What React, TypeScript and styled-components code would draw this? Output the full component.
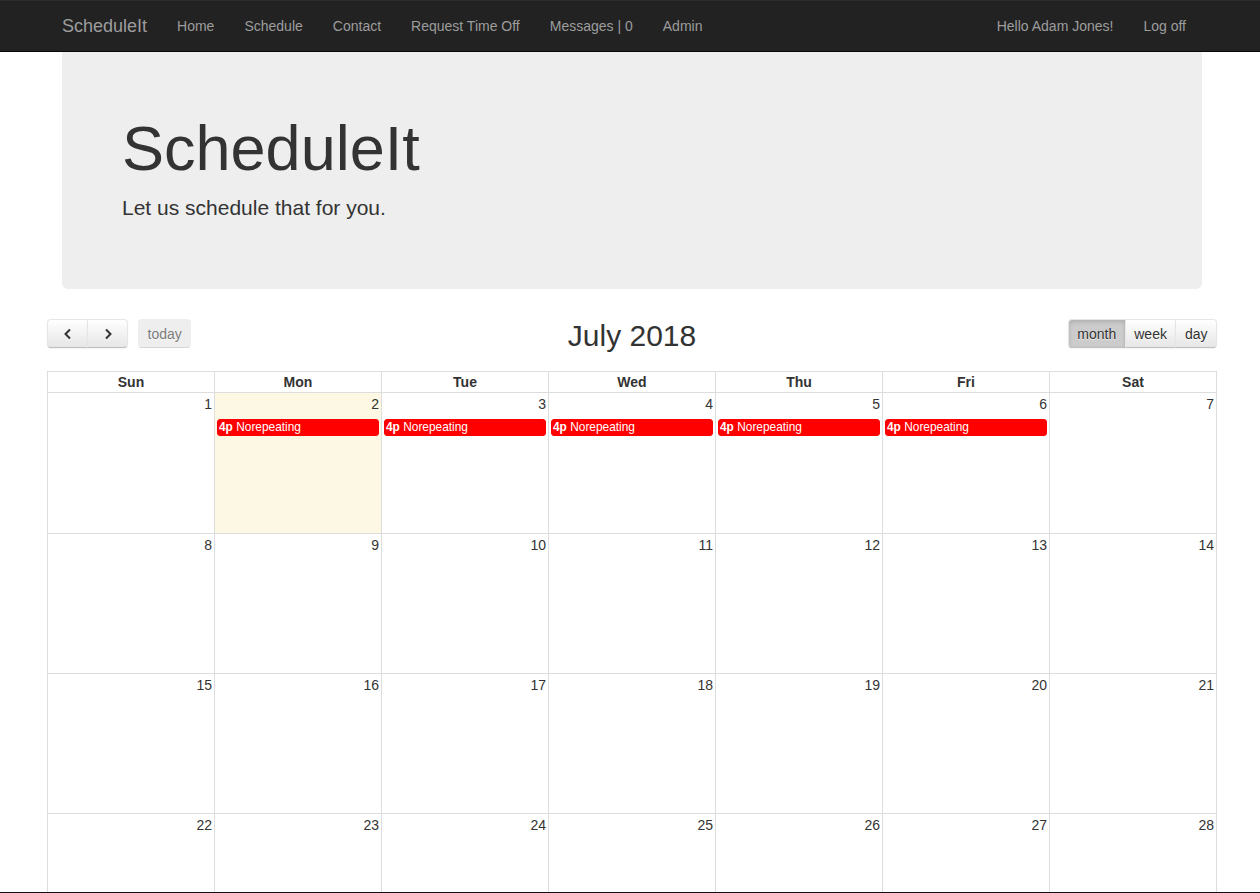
import React from 'react'
import styled, { createGlobalStyle, css } from 'styled-components'

const GlobalStyle = createGlobalStyle`
  html, body {
    margin: 0;
    padding: 0;
    background: #fff;
  }
  body {
    font-family: "Liberation Sans", Arial, Helvetica, sans-serif;
    font-size: 14px;
    line-height: 1.42857;
    color: #333;
  }
  * {
    box-sizing: border-box;
  }
`

const Page = styled.div`
  padding-left: 4px;
`

const Container = styled.div`
  width: 1170px;
  margin: 0 auto;
`

const NavbarFrame = styled.nav`
  background-color: #222;
  border-top: 1px solid #2c2c2c;
  border-bottom: 1px solid #080808;
  height: 52px;
`

const NavInner = styled(Container)`
  display: flex;
  align-items: center;
  height: 50px;
`

const Brand = styled.a`
  padding: 0 15px;
  font-size: 18px;
  line-height: 20px;
  color: #9d9d9d;
  text-decoration: none;
`

const NavList = styled.ul`
  display: flex;
  list-style: none;
  margin: 0;
  padding: 0;
`

const RightNav = styled(NavList)`
  margin-left: auto;
  margin-right: 16px;
`

const NavLink = styled.a`
  display: block;
  padding: 0 15px;
  line-height: 20px;
  color: #9d9d9d;
  text-decoration: none;
`

const Jumbotron = styled.div`
  margin: 0 15px 30px;
  padding: 48px 60px 51px;
  background-color: #eee;
  border-radius: 0 0 6px 6px;
`

const JumboTitle = styled.h1`
  margin: 14px 0 10px;
  font-size: 63px;
  font-weight: 500;
  line-height: 1.1;
  color: #333;
`

const Lead = styled.p`
  margin: 0 0 15px;
  font-size: 21px;
  font-weight: 200;
  line-height: 30px;
`

const Toolbar = styled.div`
  display: grid;
  grid-template-columns: 1fr auto 1fr;
  align-items: start;
  margin-bottom: 19px;
`

const ToolbarLeft = styled.div`
  display: flex;
  gap: 10px;
`

const ToolbarRight = styled.div`
  display: flex;
  justify-content: flex-end;
`

const Title = styled.h2`
  margin: 0;
  font-size: 30px;
  font-weight: 500;
  line-height: 33px;
  color: #333;
`

const ButtonGroup = styled.div`
  display: flex;
`

const FcButton = styled.button<{ $active?: boolean; $disabled?: boolean; $pos?: 'left' | 'mid' | 'right' | 'solo' }>`
  height: 29px;
  padding: 0 8.5px;
  font-family: inherit;
  font-size: 14px;
  color: #333;
  background-color: #f5f5f5;
  background-image: linear-gradient(to bottom, #fff, #e6e6e6);
  border: 1px solid;
  border-color: #e6e6e6 #e6e6e6 #bfbfbf;
  box-shadow: inset 0 1px 0 rgba(255, 255, 255, 0.2), 0 1px 2px rgba(0, 0, 0, 0.05);
  text-shadow: 0 1px 1px rgba(255, 255, 255, 0.75);
  display: flex;
  align-items: center;
  justify-content: center;
  cursor: pointer;
  border-radius: ${({ $pos }) =>
    $pos === 'left' ? '4px 0 0 4px' : $pos === 'right' ? '0 4px 4px 0' : $pos === 'mid' ? '0' : '4px'};
  ${({ $pos }) => ($pos === 'mid' || $pos === 'right') && css`margin-left: -1px;`}

  ${({ $active }) =>
    $active &&
    css`
      background-color: #ccc;
      background-image: none;
      box-shadow: inset 0 2px 4px rgba(0, 0, 0, 0.15), 0 1px 2px rgba(0, 0, 0, 0.05);
    `}

  ${({ $disabled }) =>
    $disabled &&
    css`
      opacity: 0.65;
      background-image: none;
      box-shadow: none;
      background-color: #e6e6e6;
      cursor: default;
    `}
`

const ArrowButton = styled(FcButton)`
  width: 41px;
  padding: 0;
`

const CalTable = styled.div`
  display: grid;
  grid-template-columns: repeat(7, 1fr);
  border-left: 1px solid #ddd;
  border-top: 1px solid #ddd;
`

const DayHeader = styled.div`
  border-right: 1px solid #ddd;
  border-bottom: 1px solid #ddd;
  text-align: center;
  font-weight: bold;
  line-height: 20px;
`

const DayCell = styled.div<{ $today?: boolean; $firstRow?: boolean }>`
  height: ${({ $firstRow }) => ($firstRow ? '141px' : '140px')};
  border-right: 1px solid #ddd;
  border-bottom: 1px solid #ddd;
  background: ${({ $today }) => ($today ? '#fcf8e3' : 'transparent')};
  display: flex;
  flex-direction: column;
`

const DayNumber = styled.div`
  text-align: right;
  padding: 1px 2px 0;
  line-height: 20px;
  height: 25px;
`

const Event = styled.div`
  margin: 1px 2px 0;
  padding: 0 1px;
  background-color: #f00;
  border: 1px solid #f00;
  border-radius: 3px;
  color: #fff;
  font-size: 11.9px;
  line-height: 15px;
  white-space: nowrap;
  overflow: hidden;
`

const EventTime = styled.span`
  font-weight: bold;
`

const BottomEdge = styled.div`
  position: fixed;
  left: 0;
  right: 0;
  bottom: 0;
  height: 1px;
  background: #111;
`

const Chevron = ({ dir }: { dir: 'left' | 'right' }) => (
  <svg width="10" height="12" viewBox="0 0 10 12">
    <path
      d={dir === 'left' ? 'M7 1.5 L2.5 6 L7 10.5' : 'M3 1.5 L7.5 6 L3 10.5'}
      fill="none"
      stroke="#333"
      strokeWidth="2"
    />
  </svg>
)

const days = ['Sun', 'Mon', 'Tue', 'Wed', 'Thu', 'Fri', 'Sat']

export default function App() {
  const cells = Array.from({ length: 28 }, (_, i) => i + 1)
  return (
    <>
      <GlobalStyle />
      <NavbarFrame>
        <Page>
          <NavInner>
            <Brand href="#">ScheduleIt</Brand>
            <NavList>
              <li><NavLink href="#">Home</NavLink></li>
              <li><NavLink href="#">Schedule</NavLink></li>
              <li><NavLink href="#">Contact</NavLink></li>
              <li><NavLink href="#">Request Time Off</NavLink></li>
              <li><NavLink href="#">Messages | 0</NavLink></li>
              <li><NavLink href="#">Admin</NavLink></li>
            </NavList>
            <RightNav>
              <li><NavLink href="#">Hello Adam Jones!</NavLink></li>
              <li><NavLink href="#">Log off</NavLink></li>
            </RightNav>
          </NavInner>
        </Page>
      </NavbarFrame>
      <Page>
        <Container>
          <Jumbotron>
            <JumboTitle>ScheduleIt</JumboTitle>
            <Lead>Let us schedule that for you.</Lead>
          </Jumbotron>
          <Toolbar>
            <ToolbarLeft>
              <ButtonGroup>
                <ArrowButton $pos="left"><Chevron dir="left" /></ArrowButton>
                <ArrowButton $pos="right"><Chevron dir="right" /></ArrowButton>
              </ButtonGroup>
              <FcButton $pos="solo" $disabled>today</FcButton>
            </ToolbarLeft>
            <Title>July 2018</Title>
            <ToolbarRight>
              <ButtonGroup>
                <FcButton $pos="left" $active>month</FcButton>
                <FcButton $pos="mid">week</FcButton>
                <FcButton $pos="right">day</FcButton>
              </ButtonGroup>
            </ToolbarRight>
          </Toolbar>
          <CalTable>
            {days.map(d => (
              <DayHeader key={d}>{d}</DayHeader>
            ))}
            {cells.map(n => (
              <DayCell key={n} $today={n === 2} $firstRow={n <= 7}>
                <DayNumber>{n}</DayNumber>
                {n >= 2 && n <= 6 && (
                  <Event>
                    <EventTime>4p</EventTime> Norepeating
                  </Event>
                )}
              </DayCell>
            ))}
          </CalTable>
        </Container>
      </Page>
      <BottomEdge />
    </>
  )
}
